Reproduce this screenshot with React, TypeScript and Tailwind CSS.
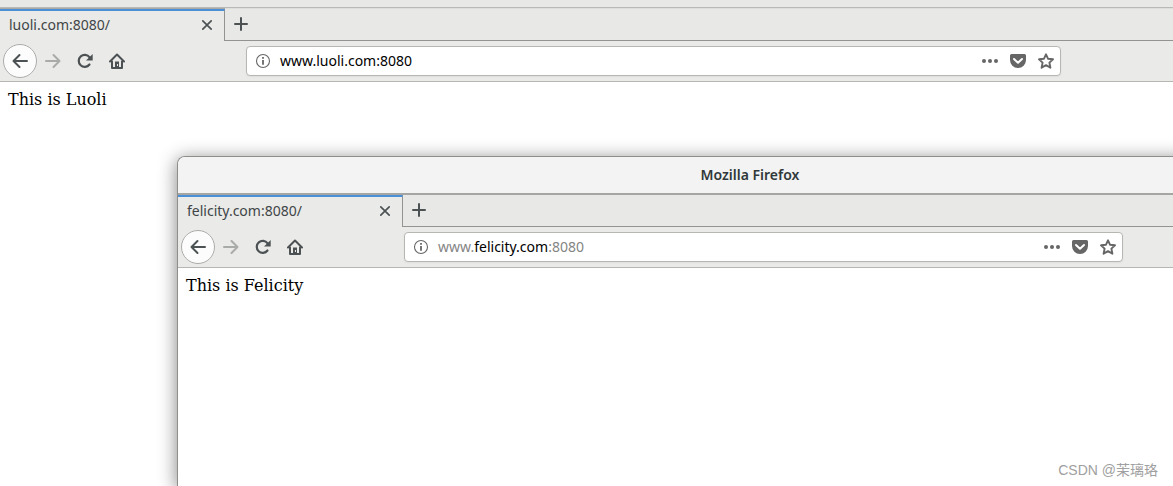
import React from "react";

function BackIcon() {
  return (
    <svg viewBox="0 0 16 16" className="size-4" fill="none" stroke="currentColor" strokeWidth="2" strokeLinecap="round" strokeLinejoin="round" aria-hidden="true">
      <path d="M15 8H1.5M7.5 2L1.5 8l6 6" />
    </svg>
  );
}

function ForwardIcon() {
  return (
    <svg viewBox="0 0 16 16" className="size-4" fill="none" stroke="currentColor" strokeWidth="2" strokeLinecap="round" strokeLinejoin="round" aria-hidden="true">
      <path d="M1 8h13.500M8.500 2l6 6-6 6" />
    </svg>
  );
}

function ReloadIcon() {
  return (
    <svg viewBox="0 0 16 16" className="size-4" fill="none" stroke="currentColor" strokeWidth="2.200" strokeLinecap="round" aria-hidden="true">
      <path d="M12.500 11.500A6 6 0 1 1 12.600 4.300" />
      <path d="M15.700 1v6.600H9z" fill="currentColor" stroke="none" />
    </svg>
  );
}

function HomeIcon() {
  return (
    <svg viewBox="0 0 16 16" className="size-4" fill="none" stroke="currentColor" strokeWidth="2" strokeLinecap="round" strokeLinejoin="round" aria-hidden="true">
      <path d="M1 8.500L8 1.500l7 7M3 8.500V15h10V8.500" />
      <path d="M6 15V8.500h4V15z" fill="currentColor" stroke="none" />
      <path d="M8 11h1v2H8z" fill="#eaeae8" stroke="none" />
    </svg>
  );
}

function InfoIcon() {
  return (
    <svg viewBox="0 0 16 16" className="size-4" fill="none" stroke="currentColor" aria-hidden="true">
      <circle cx="8" cy="8" r="6.500" strokeWidth="1.100" />
      <path d="M8 7v4.800M8 4v1.800" strokeWidth="1.800" />
    </svg>
  );
}

function PocketIcon() {
  return (
    <svg viewBox="0 0 16 16" className="size-4" aria-hidden="true">
      <path d="M1.500 1h13A1.500 1.500 0 0 1 16 2.500V7A8 8 0 0 1 0 7V2.500A1.500 1.500 0 0 1 1.500 1z" fill="currentColor" />
      <path d="M4 6l4 3.800L12 6" fill="none" stroke="#fff" strokeWidth="2" strokeLinecap="round" strokeLinejoin="round" />
    </svg>
  );
}

function StarIcon() {
  return (
    <svg viewBox="0 0 16 16" className="size-4" fill="none" stroke="currentColor" strokeWidth="1.900" strokeLinejoin="round" aria-hidden="true">
      <path d="M8 1.300l2 4.400 5 .600-3.600 3.300 1 5.100L8 12.200l-4.400 2.500 1-5.100L1 6.300l5-.600z" />
    </svg>
  );
}

function TabStrip({ title }: { title: string }) {
  return (
    <div className="flex h-8 bg-[#e8e8e6]">
      <div className="flex w-[225px] items-center justify-between border-t-2 border-r border-t-[#4a90d9] border-r-[#939391] bg-[#eaeae8] pr-[9px] pb-[2px] pl-[9px]">
        <span className="text-sm leading-5 text-[#3f4547]">{title}</span>
        <button type="button" aria-label="Close tab" className="flex size-4 items-center justify-center text-[#4c5254]">
          <svg viewBox="0 0 16 16" className="size-4" fill="none" stroke="currentColor" strokeWidth="1.700" strokeLinecap="round" aria-hidden="true">
            <path d="M3.800 3.800l8.400 8.400M12.200 3.800l-8.400 8.400" />
          </svg>
        </button>
      </div>
      <div className="flex flex-1 items-center border-b border-[#939391] pb-px pl-2">
        <button type="button" aria-label="New tab" className="flex size-4 items-center justify-center text-[#4c5254]">
          <svg viewBox="0 0 16 16" className="size-4" fill="none" stroke="currentColor" strokeWidth="2" strokeLinecap="round" aria-hidden="true">
            <path d="M8 2v12M2 8h12" />
          </svg>
        </button>
      </div>
    </div>
  );
}

function Toolbar({ children, fieldClass }: { children: React.ReactNode; fieldClass: string }) {
  return (
    <div className="flex h-[41px] items-center border-b border-[#b6b6b3] bg-[#eaeae8] pl-[3px] text-[#4c5254]">
      <button type="button" aria-label="Back" className="flex size-[34px] shrink-0 items-center justify-center rounded-full border border-[#acacaa] bg-[#fcfcfc]">
        <BackIcon />
      </button>
      <div className="flex shrink-0 gap-4 pl-2">
        <button type="button" aria-label="Forward" disabled className="text-[#a9aba9]"><ForwardIcon /></button>
        <button type="button" aria-label="Reload"><ReloadIcon /></button>
        <button type="button" aria-label="Home"><HomeIcon /></button>
      </div>
      <div className={"flex h-[30px] flex-1 items-center rounded border border-[#b6b6b3] bg-white px-[6px] text-[#666] shadow-xs " + fieldClass}>
        <button type="button" aria-label="Site information" className="ml-[2px]"><InfoIcon /></button>
        <div className="flex-1 pl-[9px] text-sm leading-5">{children}</div>
        <div className="flex gap-3">
          <button type="button" aria-label="Page actions">
            <svg viewBox="0 0 16 16" className="size-4" fill="currentColor" aria-hidden="true">
              <circle cx="2" cy="8" r="2" /><circle cx="8" cy="8" r="2" /><circle cx="14" cy="8" r="2" />
            </svg>
          </button>
          <button type="button" aria-label="Save to Pocket"><PocketIcon /></button>
          <button type="button" aria-label="Bookmark this page"><StarIcon /></button>
        </div>
      </div>
    </div>
  );
}

function Page({ text }: { text: string }) {
  return <p className="p-2 font-['DejaVu_Serif',serif] text-base leading-5 text-black">{text}</p>;
}

export default function App() {
  return (
    <main className="relative min-h-screen overflow-hidden bg-white font-['Noto_Sans',sans-serif]">
      <section aria-label="Luoli window">
        <div className="h-2 border-b border-[#b9b9b6] bg-[#e8e8e6]" />
        <div className="h-px bg-[#dededb]">
          <div className="h-px w-[225px] bg-[#aaa9a4]" />
        </div>
        <TabStrip title="luoli.com:8080/" />
        <Toolbar fieldClass="mr-28 ml-[121px]">
          <span className="text-black">www.luoli.com:8080</span>
        </Toolbar>
        <Page text="This is Luoli" />
      </section>

      <section
        aria-label="Felicity window"
        className="absolute top-[156px] right-[-149px] bottom-0 left-[177px] overflow-hidden rounded-tl-lg border-t border-l border-[#8e8e8b] bg-white shadow-[0_3px_18px_1px_rgba(0,0,0,0.45)]"
      >
        <header className="flex h-[38px] items-center justify-center border-b-2 border-[#a5a5a1] bg-[#f3f3f3]">
          <h1 className="text-sm leading-5 font-semibold text-[#30383a]">Mozilla Firefox</h1>
        </header>
        <TabStrip title="felicity.com:8080/" />
        <Toolbar fieldClass="mr-[199px] ml-[101px]">
          <span className="text-[#858585]">www.<span className="text-black">felicity.com</span>:8080</span>
        </Toolbar>
        <Page text="This is Felicity" />
      </section>

      <div className="absolute right-[15px] bottom-[6px] font-['Liberation_Sans','Noto_Sans_CJK_SC',sans-serif] text-sm leading-5 text-[#a0a0a0]">
        CSDN @茉璃珞
      </div>
    </main>
  );
}
